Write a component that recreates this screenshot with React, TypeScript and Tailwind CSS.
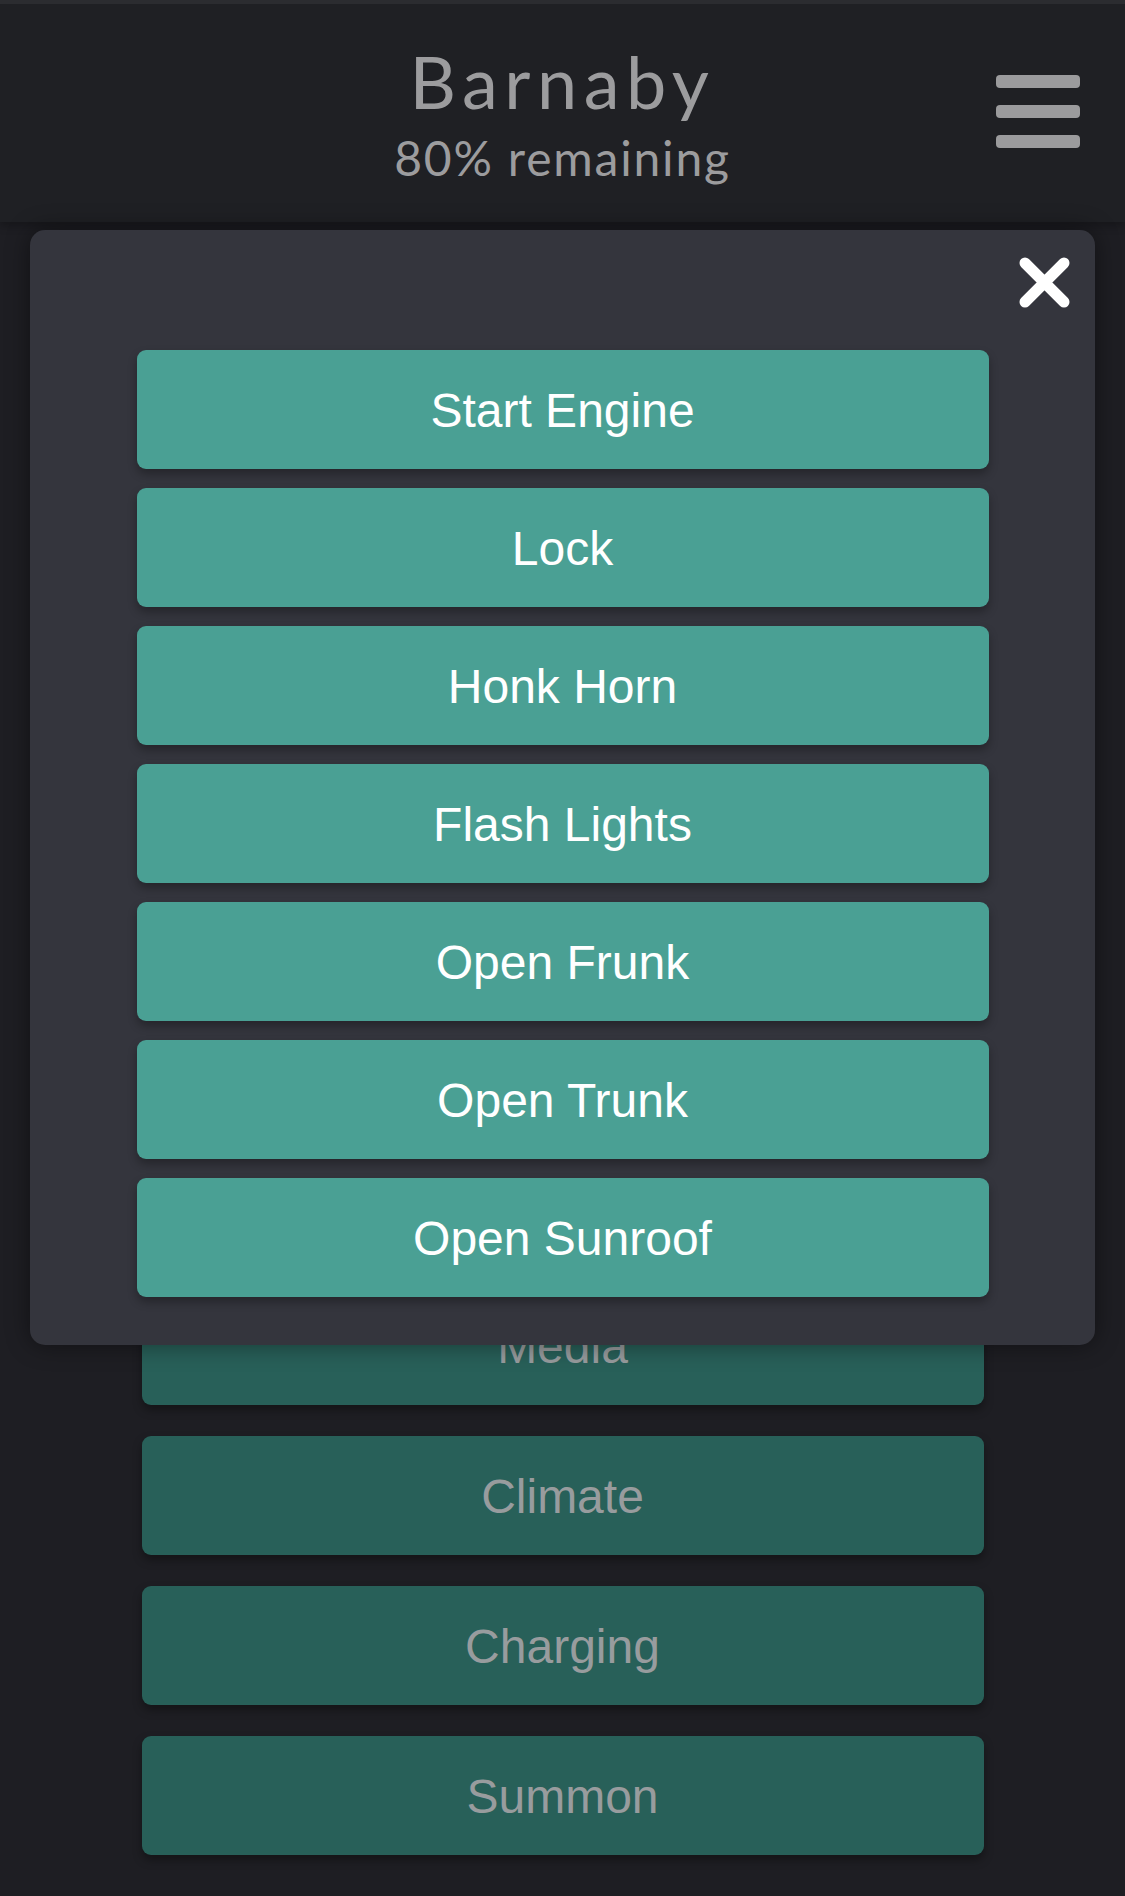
import React from "react";

const actions = ["Start Engine", "Lock", "Honk Horn", "Flash Lights", "Open Frunk", "Open Trunk", "Open Sunroof"];

const sections = [
  "Controls",
  "Status",
  "Location",
  "Security",
  "Windows",
  "Seats",
  "Software",
  "Media",
  "Climate",
  "Charging",
  "Summon",
];

export default function App() {
  return (
    <div className="relative min-h-screen w-[1125px] bg-[#1e1e23] font-['Liberation_Sans',Arial,sans-serif]">
      {/* Header */}
      <header className="relative z-10 h-[222px] border-t-4 border-[#2b2c30] bg-[#1f2024] shadow-[0_4px_8px_rgba(0,0,0,0.25)]">
        <div className="flex flex-col items-center pt-[37px] font-['Lato',sans-serif] text-[#9c9c9e]">
          <div className="h-[80px] text-[72px] leading-[80px] tracking-[6.5px]">Barnaby</div>
          <div className="mt-[9px] h-[56px] text-[48px] leading-[56px] tracking-[1.8px]">80% remaining</div>
        </div>
        <button className="absolute right-[45px] top-[71px] flex w-[84px] flex-col gap-[17px]">
          <span className="block h-[13px] w-full rounded-[4px] bg-[#9b9b9d]" />
          <span className="block h-[13px] w-full rounded-[4px] bg-[#9b9b9d]" />
          <span className="block h-[13px] w-full rounded-[4px] bg-[#9b9b9d]" />
        </button>
      </header>

      {/* Section list (behind the modal) */}
      <div className="flex flex-col items-center gap-[31.5px] pt-[14px] pb-[42px]">
        {sections.map((s) => (
          <button
            key={s}
            className="flex h-[118.5px] w-[842px] items-center justify-center rounded-[9px] bg-[#286059] pt-[3px] text-[48px] text-[#989c9e] shadow-[0_5px_10px_rgba(0,0,0,0.35)]"
          >
            {s}
          </button>
        ))}
      </div>

      {/* Quick actions modal */}
      <div className="absolute left-[30px] right-[30px] top-[230px] z-20 rounded-[15px] bg-[#34353d] pt-[120px] pb-[48px] shadow-[0_0_24px_rgba(0,0,0,0.45)]">
        <button className="absolute right-[24px] top-[26px] h-[53px] w-[53px]">
          <svg viewBox="0 0 53 53" className="h-full w-full">
            <path d="M7 7 L46 46 M46 7 L7 46" stroke="#ffffff" strokeWidth="11" strokeLinecap="round" fill="none" />
          </svg>
        </button>
        <div className="flex flex-col items-center gap-[19.5px]">
          {actions.map((a) => (
            <button
              key={a}
              className="flex h-[118.5px] w-[852px] items-center justify-center rounded-[9px] bg-[#4aa094] pt-[3px] text-[48px] text-white shadow-[0_5px_10px_rgba(0,0,0,0.3)]"
            >
              {a}
            </button>
          ))}
        </div>
      </div>
    </div>
  );
}
